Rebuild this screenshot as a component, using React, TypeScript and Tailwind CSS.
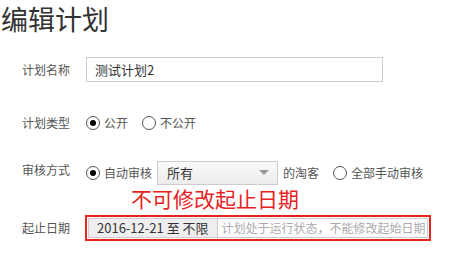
import React from 'react';

const font = { fontFamily: '"Noto Sans CJK SC", "Noto Sans", sans-serif' };

const Radio = ({ checked }: { checked?: boolean }) => (
  <span className="flex h-[14px] w-[14px] items-center justify-center rounded-full border border-[#555] bg-white">
    {checked && <span className="h-[6px] w-[6px] rounded-full bg-black" />}
  </span>
);

export default function App() {
  return (
    <div className="h-[257px] w-[451px] overflow-hidden bg-white text-[#333]" style={font}>
      <h1 className="h-[38px] pl-[1px] text-[27px] leading-[38px] font-normal text-[#333]">编辑计划</h1>

      <div className="mt-[19px] flex h-[25px] items-center">
        <span className="w-[86px] pl-[22px] text-[12px] text-[#555]">计划名称</span>
        <div className="flex h-[25px] w-[297px] items-center border border-[#ccc] px-[8px] text-[13px] text-[#333]">
          测试计划2
        </div>
      </div>

      <div className="mt-[28px] flex h-[25px] items-center text-[12px] text-[#555]">
        <span className="w-[86px] pl-[22px]">计划类型</span>
        <label className="flex items-center gap-[4px]">
          <Radio checked />
          <span>公开</span>
        </label>
        <label className="ml-[14px] flex items-center gap-[4px]">
          <Radio />
          <span>不公开</span>
        </label>
      </div>

      <div className="mt-[25px] flex h-[25px] items-center text-[12px] text-[#555]">
        <span className="w-[86px] pl-[22px] self-start pt-[1px]">审核方式</span>
        <label className="flex items-center gap-[4px]">
          <Radio checked />
          <span>自动审核</span>
        </label>
        <div className="ml-[5px] flex h-[24px] w-[121px] items-center justify-between border border-[#ccc] bg-gradient-to-b from-[#fafafa] to-[#ececec] pl-[9px] pr-[8px] text-[13px] text-[#333]">
          <span>所有</span>
          <span className="h-0 w-0 border-x-[5px] border-t-[5px] border-x-transparent border-t-[#999]" />
        </div>
        <span className="ml-[5px]">的淘客</span>
        <label className="ml-[14px] flex items-center gap-[4px]">
          <Radio />
          <span>全部手动审核</span>
        </label>
      </div>

      <div className="flex h-[25px] items-end pl-[131px] text-[21px] leading-[23px] text-[#e8231f]">
        不可修改起止日期
      </div>

      <div className="mt-[5px] flex h-[26px] items-center">
        <span className="w-[85px] pl-[22px] text-[12px] text-[#555]">起止日期</span>
        <div className="flex h-[26px] w-[346px] items-stretch border-2 border-[#e8231f] p-[1px]">
          <div className="flex items-center border border-[#ccc] bg-[#eee] px-[8px] text-[13px] text-[#333]">
            2016-12-21 至 不限
          </div>
          <div className="flex flex-1 items-center border border-l-0 border-[#ccc] pl-[4px] text-[12px] text-[#aaa]">
            计划处于运行状态，不能修改起始日期
          </div>
        </div>
      </div>
    </div>
  );
}
